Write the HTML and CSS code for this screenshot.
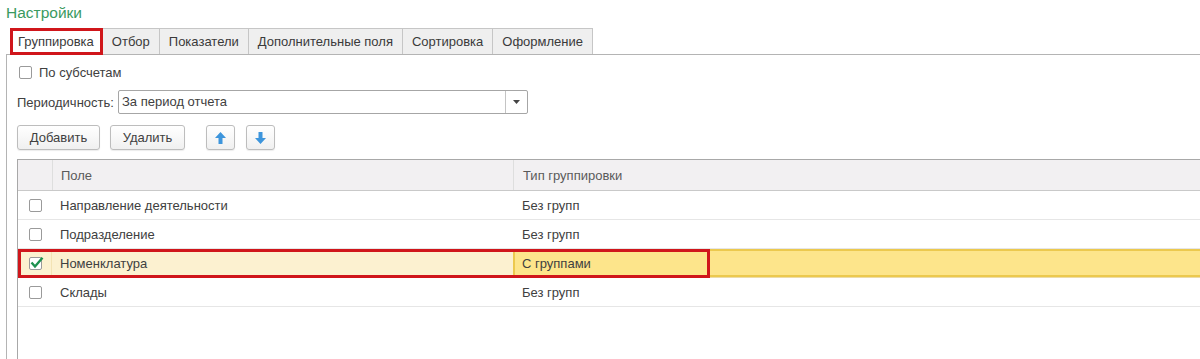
FILE: index.html
```html
<!DOCTYPE html>
<html lang="ru">
<head>
    <meta charset="UTF-8">
    <meta name="viewport" content="width=device-width, initial-scale=1.0">
    <title>Настройки</title>
    <link rel="stylesheet" href="styles.css">
</head>
<body>
    <div class="settings">
        <div class="title">Настройки</div>

        <!-- вкладки -->
        <div class="tabs">
            <div class="tab active">Группировка</div>
            <div class="tab">Отбор</div>
            <div class="tab">Показатели</div>
            <div class="tab">Дополнительные поля</div>
            <div class="tab">Сортировка</div>
            <div class="tab">Оформление</div>
        </div>

        <div class="panel">
            <label class="check-row">
                <span class="checkbox"></span>
                <span>По субсчетам</span>
            </label>

            <div class="field-row">
                <span class="field-label">Периодичность:</span>
                <div class="select">
                    <span class="select-value">За период отчета</span>
                    <span class="select-btn">
                        <svg width="7" height="4" viewBox="0 0 7 4"><polygon points="0,0 7,0 3.5,4" fill="#444"/></svg>
                    </span>
                </div>
            </div>

            <div class="toolbar">
                <button class="btn btn-add">Добавить</button>
                <button class="btn btn-del">Удалить</button>
                <button class="btn btn-icon btn-up">
                    <svg width="11" height="12" viewBox="0 0 11 12"><polygon points="5.5,0 11,6 7.5,6 7.5,12 3.5,12 3.5,6 0,6" fill="#3d95dc"/></svg>
                </button>
                <button class="btn btn-icon">
                    <svg width="11" height="12" viewBox="0 0 11 12"><polygon points="5.5,12 11,6 7.5,6 7.5,0 3.5,0 3.5,6 0,6" fill="#3d95dc"/></svg>
                </button>
            </div>

            <!-- таблица группировок -->
            <div class="grid">
                <div class="grid-head">
                    <div class="cell cell-check"></div>
                    <div class="cell cell-field">Поле</div>
                    <div class="cell cell-type">Тип группировки</div>
                </div>
                <div class="grid-row">
                    <div class="cell cell-check"><span class="checkbox"></span></div>
                    <div class="cell cell-field">Направление деятельности</div>
                    <div class="cell cell-type">Без групп</div>
                </div>
                <div class="grid-row">
                    <div class="cell cell-check"><span class="checkbox"></span></div>
                    <div class="cell cell-field">Подразделение</div>
                    <div class="cell cell-type">Без групп</div>
                </div>
                <div class="grid-row current">
                    <div class="cell cell-check">
                        <span class="checkbox checked">
                            <svg width="14" height="12" viewBox="0 0 14 12"><polyline points="1.5,5.5 5,9.5 12.5,0.8" fill="none" stroke="#1e9150" stroke-width="2.4"/></svg>
                        </span>
                    </div>
                    <div class="cell cell-field">Номенклатура</div>
                    <div class="cell cell-type">С группами</div>
                    <div class="cell cell-rest"></div>
                </div>
                <div class="grid-row">
                    <div class="cell cell-check"><span class="checkbox"></span></div>
                    <div class="cell cell-field">Склады</div>
                    <div class="cell cell-type">Без групп</div>
                </div>
            </div>
        </div>
    </div>
</body>
</html>
```

FILE: styles.css
```css
/* общий вид страницы */
body {
    margin: 0;
    font-family: 'Liberation Sans', Arial, sans-serif;
    font-size: 13px;
    color: #404040;
    background-color: white;
    overflow: hidden;
    height: 359px;
}

.settings {
    margin-left: 6px;
}

.title {
    height: 28px;
    padding-top: 4px;
    box-sizing: border-box;
    font-size: 15.5px;
    line-height: 18px;
    color: #3a9a5f;
}

/* вкладки */
.tabs {
    display: flex;
    height: 27px;
    padding-left: 4px;
    border-bottom: 1px solid #b4b4b4;
    box-sizing: border-box;
}

.tab {
    height: 26px;
    line-height: 25px;
    padding: 0 9px;
    background-color: #efefef;
    border: 1px solid #c6c6c6;
    border-bottom: none;
    margin-right: -1px;
    box-sizing: border-box;
    color: #3a3a3a;
}

.tab.active {
    padding: 0 8px 0 7px;
    background-color: white;
    height: 27px;
    outline: 3px solid #d0161b;
    outline-offset: -3px;
    position: relative;
    z-index: 1;
}

/* содержимое вкладки */
.panel {
    border-left: 1px solid #b4b4b4;
    padding: 7px 0 0 10px;
    height: 304px;
    box-sizing: border-box;
}

.check-row {
    display: flex;
    align-items: center;
    gap: 7px;
    height: 20px;
    padding-left: 2px;
    color: #404040;
}

.checkbox {
    display: inline-block;
    width: 13px;
    height: 13px;
    border: 1px solid #9a9a9a;
    border-radius: 2px;
    background-color: white;
    box-sizing: border-box;
    position: relative;
}

.field-row {
    display: flex;
    align-items: center;
    margin-top: 8px;
    height: 24px;
}

.field-label {
    width: 101px;
}

.select {
    display: flex;
    width: 410px;
    height: 24px;
    border: 1px solid #a6a6a6;
    border-radius: 2px;
    box-sizing: border-box;
}

.select-value {
    flex: 1;
    line-height: 22px;
    padding-left: 3px;
}

.select-btn {
    width: 21px;
    border-left: 1px solid #c4c4c4;
    display: flex;
    align-items: center;
    justify-content: center;
}

/* кнопки */
.toolbar {
    display: flex;
    margin-top: 11px;
    height: 25px;
}

.btn {
    height: 25px;
    padding: 0;
    font-family: inherit;
    font-size: 13px;
    color: #404040;
    background: linear-gradient(#ffffff, #f0f0f0);
    border: 1px solid #bdbdbd;
    border-radius: 3px;
    box-shadow: 0 1px 1px rgba(0, 0, 0, 0.08);
}

.btn-add {
    width: 83px;
}

.btn-del {
    width: 75px;
    margin-left: 10px;
}

.btn-icon {
    width: 29px;
    margin-left: 11px;
    display: flex;
    align-items: center;
    justify-content: center;
}

.btn-up {
    margin-left: 21px;
}

/* таблица */
.grid {
    margin-top: 9px;
    border-top: 1px solid #a8a8a8;
    border-left: 1px solid #a8a8a8;
    height: 200px;
}

.grid-head,
.grid-row {
    display: flex;
    height: 29px;
    border-bottom: 1px solid #e6e6e6;
    box-sizing: border-box;
}

.grid-head {
    height: 31px;
    background-color: #f2f0f2;
    border-bottom-color: #c9c9c9;
    color: #5a5a5a;
}

.cell {
    display: flex;
    align-items: center;
    box-sizing: border-box;
}

.cell-check {
    width: 34px;
    justify-content: center;
    padding-left: 1px;
}

.cell-field {
    width: 461px;
    padding-left: 8px;
}

.cell-type {
    width: 197px;
    padding-left: 9px;
}

.grid-head .cell-field,
.grid-head .cell-type {
    border-left: 1px solid #dedede;
}

.grid-head .cell-type {
    flex: 1;
}

.cell-rest {
    flex: 1;
}

/* текущая строка */
.grid-row.current {
    position: relative;
    background-color: #fcf1d0;
    border-bottom-color: #ecdca8;
}

.current .cell-type,
.current .cell-rest {
    background-color: #fde58b;
    border-top: 2px solid #ecc94e;
    border-bottom: 2px solid #ecc94e;
}

.current .cell-type {
    border-left: 2px solid #ecc94e;
    padding-left: 7px;
}

.current .cell-check {
    border-right: 1px solid #f3e3b4;
}

.checkbox.checked svg {
    position: absolute;
    left: 0;
    top: -1px;
}

/* красная рамка-выделение поверх строки */
.grid-row.current::after {
    content: "";
    position: absolute;
    left: 0;
    top: 0;
    width: 692px;
    height: 29px;
    border: 3px solid #d0161b;
    box-sizing: border-box;
}
```
